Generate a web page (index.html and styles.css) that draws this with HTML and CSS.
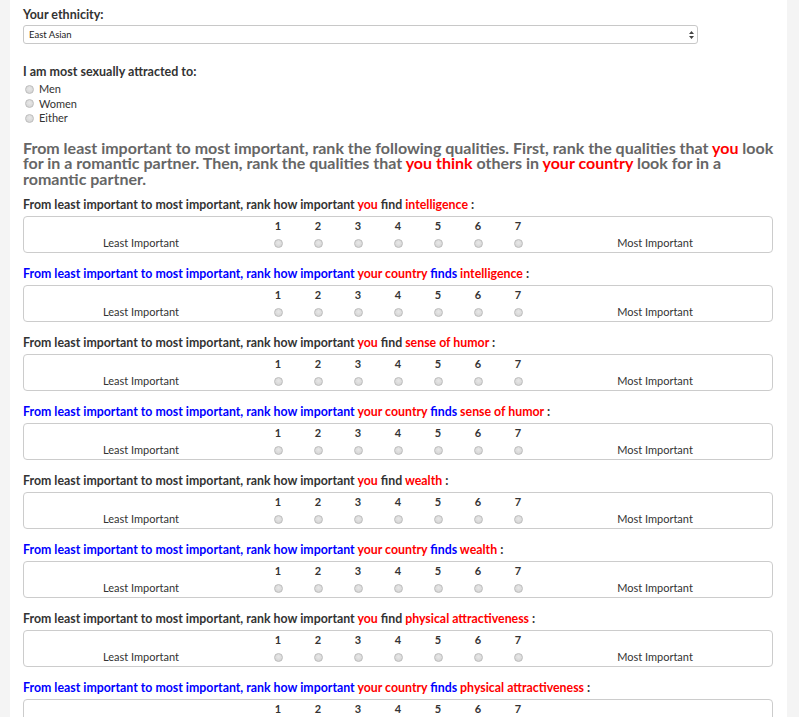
FILE: index.html
```html
<!DOCTYPE html>
<html>
<head>
<meta charset="utf-8">
<link rel="stylesheet" href="styles.css">
</head>
<body>
<div class="page">
  <div class="field-label">Your ethnicity:</div>
  <div class="select-wrap">
    <div class="select">East Asian</div>
    <svg class="select-arrows" width="5" height="8" viewBox="0 0 5 8"><path d="M2.5 0 L5 3 L0 3 Z M2.5 8 L5 5 L0 5 Z" fill="#444"/></svg>
  </div>

  <div class="field-label gap-top">I am most sexually attracted to:</div>
  <ul class="radio-list">
    <li><span class="radio"></span>Men</li>
    <li><span class="radio"></span>Women</li>
    <li><span class="radio"></span>Either</li>
  </ul>

  <h2 class="intro">From least important to most important, rank the following qualities. First, rank the qualities that <span class="red">you</span> look for in a romantic partner. Then, rank the qualities that <span class="red">you think</span> others in <span class="red">your country</span> look for in a romantic partner.</h2>

  <div class="question">
    <div class="q-label">From least important to most important, rank how important <span class="red">you</span> find <span class="red">intelligence</span> :</div>
    <table class="scale">
      <tr class="nums"><td class="end"></td><td>1</td><td>2</td><td>3</td><td>4</td><td>5</td><td>6</td><td>7</td><td class="end"></td></tr>
      <tr class="opts"><td class="end">Least Important</td><td><span class="radio"></span></td><td><span class="radio"></span></td><td><span class="radio"></span></td><td><span class="radio"></span></td><td><span class="radio"></span></td><td><span class="radio"></span></td><td><span class="radio"></span></td><td class="end">Most Important</td></tr>
    </table>
  </div>

  <div class="question">
    <div class="q-label blue">From least important to most important, rank how important <span class="red">your country</span> finds <span class="red">intelligence</span> <span class="dark">:</span></div>
    <table class="scale">
      <tr class="nums"><td class="end"></td><td>1</td><td>2</td><td>3</td><td>4</td><td>5</td><td>6</td><td>7</td><td class="end"></td></tr>
      <tr class="opts"><td class="end">Least Important</td><td><span class="radio"></span></td><td><span class="radio"></span></td><td><span class="radio"></span></td><td><span class="radio"></span></td><td><span class="radio"></span></td><td><span class="radio"></span></td><td><span class="radio"></span></td><td class="end">Most Important</td></tr>
    </table>
  </div>

  <div class="question">
    <div class="q-label">From least important to most important, rank how important <span class="red">you</span> find <span class="red">sense of humor</span> :</div>
    <table class="scale">
      <tr class="nums"><td class="end"></td><td>1</td><td>2</td><td>3</td><td>4</td><td>5</td><td>6</td><td>7</td><td class="end"></td></tr>
      <tr class="opts"><td class="end">Least Important</td><td><span class="radio"></span></td><td><span class="radio"></span></td><td><span class="radio"></span></td><td><span class="radio"></span></td><td><span class="radio"></span></td><td><span class="radio"></span></td><td><span class="radio"></span></td><td class="end">Most Important</td></tr>
    </table>
  </div>

  <div class="question">
    <div class="q-label blue">From least important to most important, rank how important <span class="red">your country</span> finds <span class="red">sense of humor</span> <span class="dark">:</span></div>
    <table class="scale">
      <tr class="nums"><td class="end"></td><td>1</td><td>2</td><td>3</td><td>4</td><td>5</td><td>6</td><td>7</td><td class="end"></td></tr>
      <tr class="opts"><td class="end">Least Important</td><td><span class="radio"></span></td><td><span class="radio"></span></td><td><span class="radio"></span></td><td><span class="radio"></span></td><td><span class="radio"></span></td><td><span class="radio"></span></td><td><span class="radio"></span></td><td class="end">Most Important</td></tr>
    </table>
  </div>

  <div class="question">
    <div class="q-label">From least important to most important, rank how important <span class="red">you</span> find <span class="red">wealth</span> :</div>
    <table class="scale">
      <tr class="nums"><td class="end"></td><td>1</td><td>2</td><td>3</td><td>4</td><td>5</td><td>6</td><td>7</td><td class="end"></td></tr>
      <tr class="opts"><td class="end">Least Important</td><td><span class="radio"></span></td><td><span class="radio"></span></td><td><span class="radio"></span></td><td><span class="radio"></span></td><td><span class="radio"></span></td><td><span class="radio"></span></td><td><span class="radio"></span></td><td class="end">Most Important</td></tr>
    </table>
  </div>

  <div class="question">
    <div class="q-label blue">From least important to most important, rank how important <span class="red">your country</span> finds <span class="red">wealth</span> <span class="dark">:</span></div>
    <table class="scale">
      <tr class="nums"><td class="end"></td><td>1</td><td>2</td><td>3</td><td>4</td><td>5</td><td>6</td><td>7</td><td class="end"></td></tr>
      <tr class="opts"><td class="end">Least Important</td><td><span class="radio"></span></td><td><span class="radio"></span></td><td><span class="radio"></span></td><td><span class="radio"></span></td><td><span class="radio"></span></td><td><span class="radio"></span></td><td><span class="radio"></span></td><td class="end">Most Important</td></tr>
    </table>
  </div>

  <div class="question">
    <div class="q-label">From least important to most important, rank how important <span class="red">you</span> find <span class="red">physical attractiveness</span> :</div>
    <table class="scale">
      <tr class="nums"><td class="end"></td><td>1</td><td>2</td><td>3</td><td>4</td><td>5</td><td>6</td><td>7</td><td class="end"></td></tr>
      <tr class="opts"><td class="end">Least Important</td><td><span class="radio"></span></td><td><span class="radio"></span></td><td><span class="radio"></span></td><td><span class="radio"></span></td><td><span class="radio"></span></td><td><span class="radio"></span></td><td><span class="radio"></span></td><td class="end">Most Important</td></tr>
    </table>
  </div>

  <div class="question">
    <div class="q-label blue">From least important to most important, rank how important <span class="red">your country</span> finds <span class="red">physical attractiveness</span> <span class="dark">:</span></div>
    <table class="scale">
      <tr class="nums"><td class="end"></td><td>1</td><td>2</td><td>3</td><td>4</td><td>5</td><td>6</td><td>7</td><td class="end"></td></tr>
      <tr class="opts"><td class="end">Least Important</td><td><span class="radio"></span></td><td><span class="radio"></span></td><td><span class="radio"></span></td><td><span class="radio"></span></td><td><span class="radio"></span></td><td><span class="radio"></span></td><td><span class="radio"></span></td><td class="end">Most Important</td></tr>
    </table>
  </div>
</div>
</body>
</html>
```

FILE: styles.css
```css
html, body {
  margin: 0;
  padding: 0;
}
body {
  background: #f4f4f4;
  font-family: Lato, "Open Sans", sans-serif;
  color: #333;
}
.page {
  margin-left: 10px;
  width: 777px;
  box-sizing: border-box;
  background: #fff;
  padding: 7px 13px 20px 13px;
  min-height: 717px;
}
.field-label {
  font-size: 12.5px;
  font-weight: bold;
  line-height: 16px;
  color: #333;
}
.gap-top {
  margin-top: 20px;
}
.select-wrap {
  position: relative;
  margin-top: 2px;
  width: 675px;
}
.select {
  box-sizing: border-box;
  height: 19px;
  border: 1px solid #c8c8c8;
  border-radius: 3px;
  font-size: 9.5px;
  line-height: 17px;
  padding-left: 5px;
  color: #222;
  background: #fff;
}
.select-arrows {
  position: absolute;
  right: 4px;
  top: 6px;
}
.radio-list {
  list-style: none;
  margin: 2px 0 0 0;
  padding: 0;
}
.radio-list li {
  font-size: 11px;
  line-height: 14.5px;
  color: #333;
  display: flex;
  align-items: center;
}
.radio-list .radio {
  margin-left: 2px;
  margin-right: 5px;
}
.radio {
  display: inline-block;
  width: 7px;
  height: 7px;
  border-radius: 50%;
  border: 1px solid #bdbdbd;
  background: radial-gradient(circle at 50% 40%, #e8e8e8, #d0d0d0);
  vertical-align: middle;
}
.intro {
  margin: 14px 0 0 0;
  font-size: 16px;
  font-weight: bold;
  line-height: 15.5px;
  color: #666;
}
.red {
  color: #ff0000;
}
.blue {
  color: #0000ff;
}
.dark {
  color: #333;
}
.question {
  margin-top: 11px;
}
.question + .question {
  margin-top: 13px;
}
.q-label {
  font-size: 12.35px;
  font-weight: bold;
  line-height: 16px;
}
.scale {
  margin-top: 3px;
  width: 750px;
  border: 1px solid #ccc;
  border-radius: 4px;
  border-spacing: 0;
  border-collapse: separate;
  table-layout: fixed;
  font-size: 11px;
  color: #333;
}
.scale td {
  width: 40px;
  padding: 0;
  text-align: center;
}
.scale td.end {
  width: 234px;
}
.nums td {
  height: 17px;
  font-weight: bold;
  line-height: 17px;
}
.opts td {
  height: 18px;
  line-height: 18px;
}
.opts .radio {
  position: relative;
  top: -1px;
}
```
